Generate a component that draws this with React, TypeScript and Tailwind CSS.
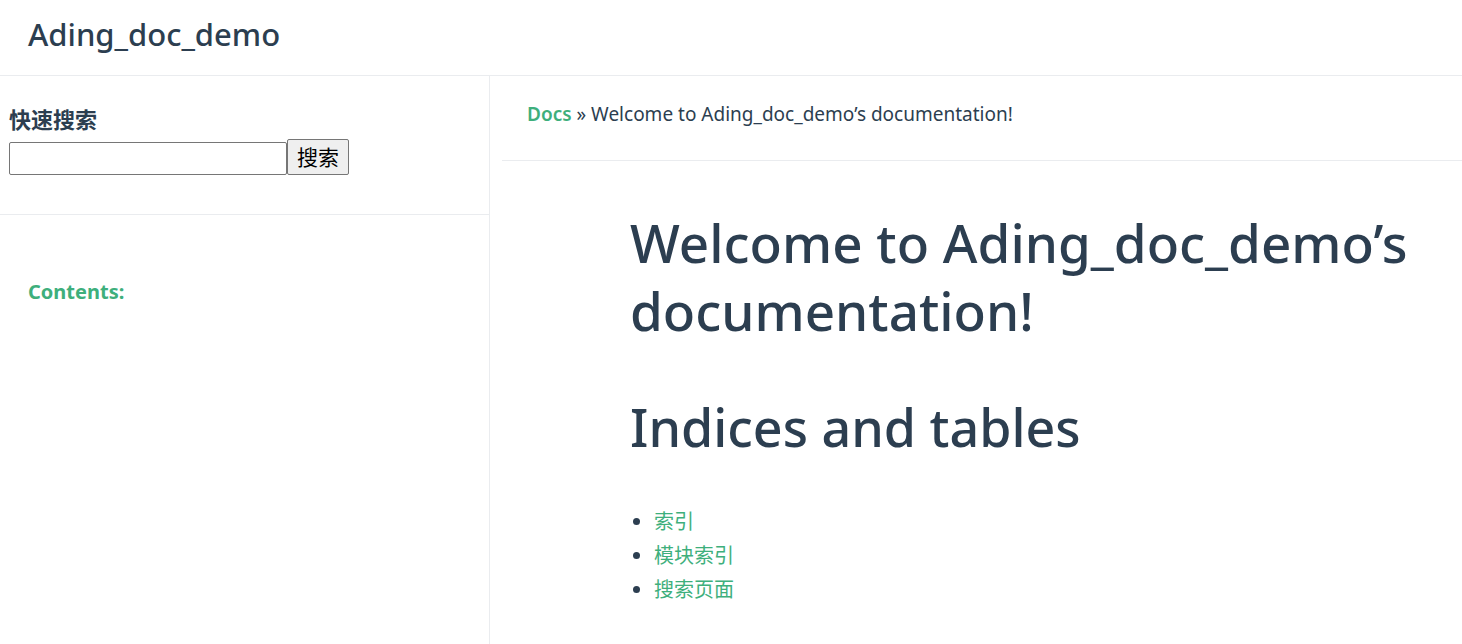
const font = {
    fontFamily: '"Noto Sans", "Noto Sans CJK SC", sans-serif',
};

const App: React.FC = () => {
    return (
        <div className="w-[1462px] h-[644px] overflow-hidden bg-white text-[#2c3e50]" style={font}>
            {/* navbar */}
            <div className="h-[76px] border-b border-[#eaecef] flex items-center px-7 pb-[6px]">
                <div className="text-[31px] leading-none font-medium">Ading_doc_demo</div>
            </div>
            <div className="flex h-[568px]">
                {/* sidebar */}
                <div className="w-[490px] border-r border-[#eaecef] shrink-0">
                    <div className="pl-[9px] pt-[24px] h-[139px] border-b border-[#eaecef]">
                        <h3 className="text-[22px] font-bold leading-[39px]">快速搜索</h3>
                        <form className="flex items-end">
                            <input
                                type="text"
                                className="w-[278px] h-[33px] border border-[#767676] rounded-[2px] bg-white"
                            />
                            <button
                                type="button"
                                className="w-[62px] h-[36px] border border-[#767676] rounded-[2px] bg-[#efefef] text-[21px] leading-none text-black"
                            >
                                搜索
                            </button>
                        </form>
                    </div>
                    <div className="pl-7 pt-[62px]">
                        <p className="text-[#3eaf7c] text-[20px] font-bold">Contents:</p>
                    </div>
                </div>
                {/* main */}
                <div className="flex-1">
                    <div className="h-[85px] border-b border-[#eaecef] ml-3 flex items-center pl-[25px] pb-2">
                        <span className="text-[19px]">
                            <a className="text-[#3eaf7c] font-semibold">Docs</a> » Welcome to Ading_doc_demo’s documentation!
                        </span>
                    </div>
                    <div className="pl-[140px] pt-[48px] pr-4">
                        <h1 className="text-[53px] leading-[68px] font-medium">
                            Welcome to Ading_doc_demo’s documentation!
                        </h1>
                        <h2 className="text-[52px] leading-[68px] font-medium mt-[48px]">Indices and tables</h2>
                        <ul className="list-disc pl-6 mt-[44px] text-[20px] leading-[34px] marker:text-[#2c3e50]">
                            <li>
                                <a className="text-[#3eaf7c]">索引</a>
                            </li>
                            <li>
                                <a className="text-[#3eaf7c]">模块索引</a>
                            </li>
                            <li>
                                <a className="text-[#3eaf7c]">搜索页面</a>
                            </li>
                        </ul>
                    </div>
                </div>
            </div>
        </div>
    );
};

export default App;
